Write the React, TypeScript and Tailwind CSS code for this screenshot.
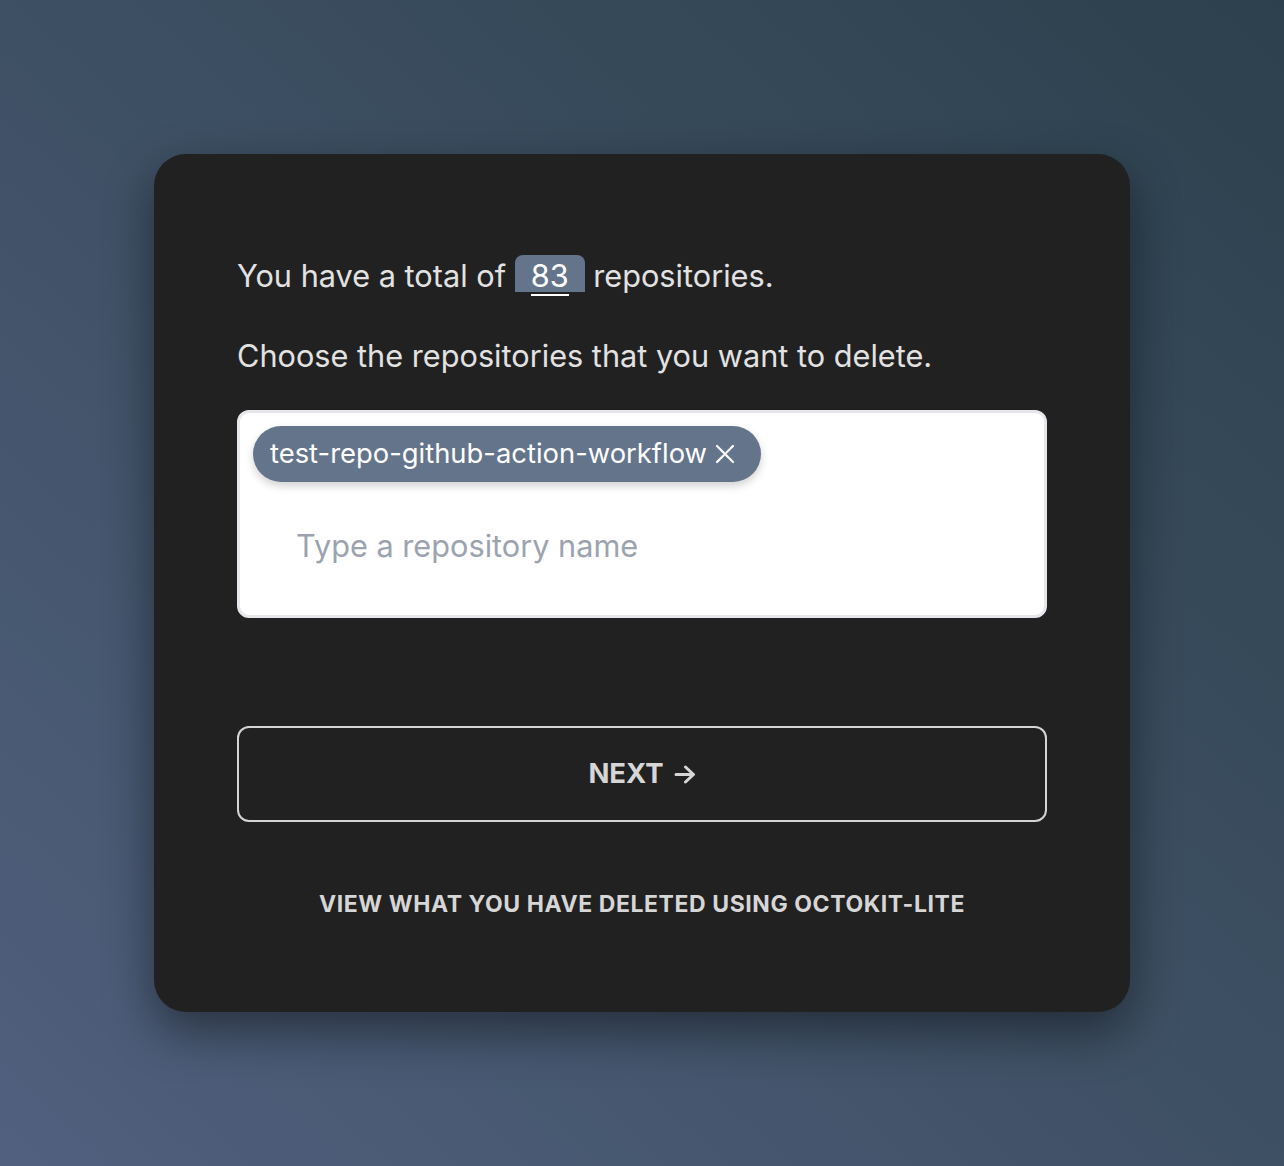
import React from 'react';

const CloseIcon = () => (
  <svg width="20" height="20" viewBox="0 0 20 20" fill="none" stroke="currentColor" strokeWidth="2.2" strokeLinecap="round">
    <path d="M2 2L18 18M18 2L2 18" />
  </svg>
);

const Arrow = () => (
  <svg width="22" height="19" viewBox="0 0 22 19" fill="none" stroke="currentColor" strokeWidth="3" strokeLinecap="round" strokeLinejoin="round">
    <path d="M2 9.5H19M11.5 2L19.5 9.5L11.5 17" />
  </svg>
);

export default function App() {
  return (
    <div
      className="min-h-screen w-full flex items-center justify-center bg-gradient-to-tr from-[#50607e] via-[#3e5064] to-[#2c414d]"
      style={{ fontFamily: 'Inter, "Noto Sans", sans-serif' }}
    >
      <div className="w-[976px] h-[858px] rounded-[32px] bg-[#212121] shadow-[0_20px_50px_rgba(0,0,0,0.45)] px-[83px] pt-[101px]">
        {/* Summary */}
        <p className="text-[30.7px] leading-[42px] text-[#e2e2e2]">
          You have a total of{' '}
          <span className="inline-block align-baseline bg-[#64748b] rounded-t-lg px-4 h-[37px] pt-[4px] leading-[33px] text-white">
            <span className="border-b-2 border-white">83</span>
          </span>{' '}
          repositories.
        </p>
        <p className="mt-[38px] text-[30.7px] leading-[42px] text-[#e2e2e2]">
          Choose the repositories that you want to delete.
        </p>

        {/* Multi select */}
        <div className="mt-[33px] h-[208px] rounded-xl border-[3px] border-[#e5e7eb] bg-white p-[13px]">
          <div className="flex">
            <span className="inline-flex items-center gap-[8px] h-[56px] rounded-full bg-[#64748b] pl-[17px] pr-[26px] text-[27.4px] text-white shadow-[0_4px_8px_rgba(0,0,0,0.18)]">
              test-repo-github-action-workflow
              <CloseIcon />
            </span>
          </div>
          <div className="mt-[43px] pl-[43px] text-[30.7px] leading-[42px] text-[#9ca3af]">
            Type a repository name
          </div>
        </div>

        {/* Actions */}
        <button className="mt-[108px] w-full h-[96px] rounded-xl border-2 border-[#d4d4d4] flex items-center justify-center gap-[10px] text-[27.5px] font-bold text-[#d6d6d6]">
          NEXT
          <Arrow />
        </button>

        <div className="mt-[65px] text-center text-[23px] font-bold tracking-wide text-[#d6d6d6]">
          VIEW WHAT YOU HAVE DELETED USING OCTOKIT-LITE
        </div>
      </div>
    </div>
  );
}
